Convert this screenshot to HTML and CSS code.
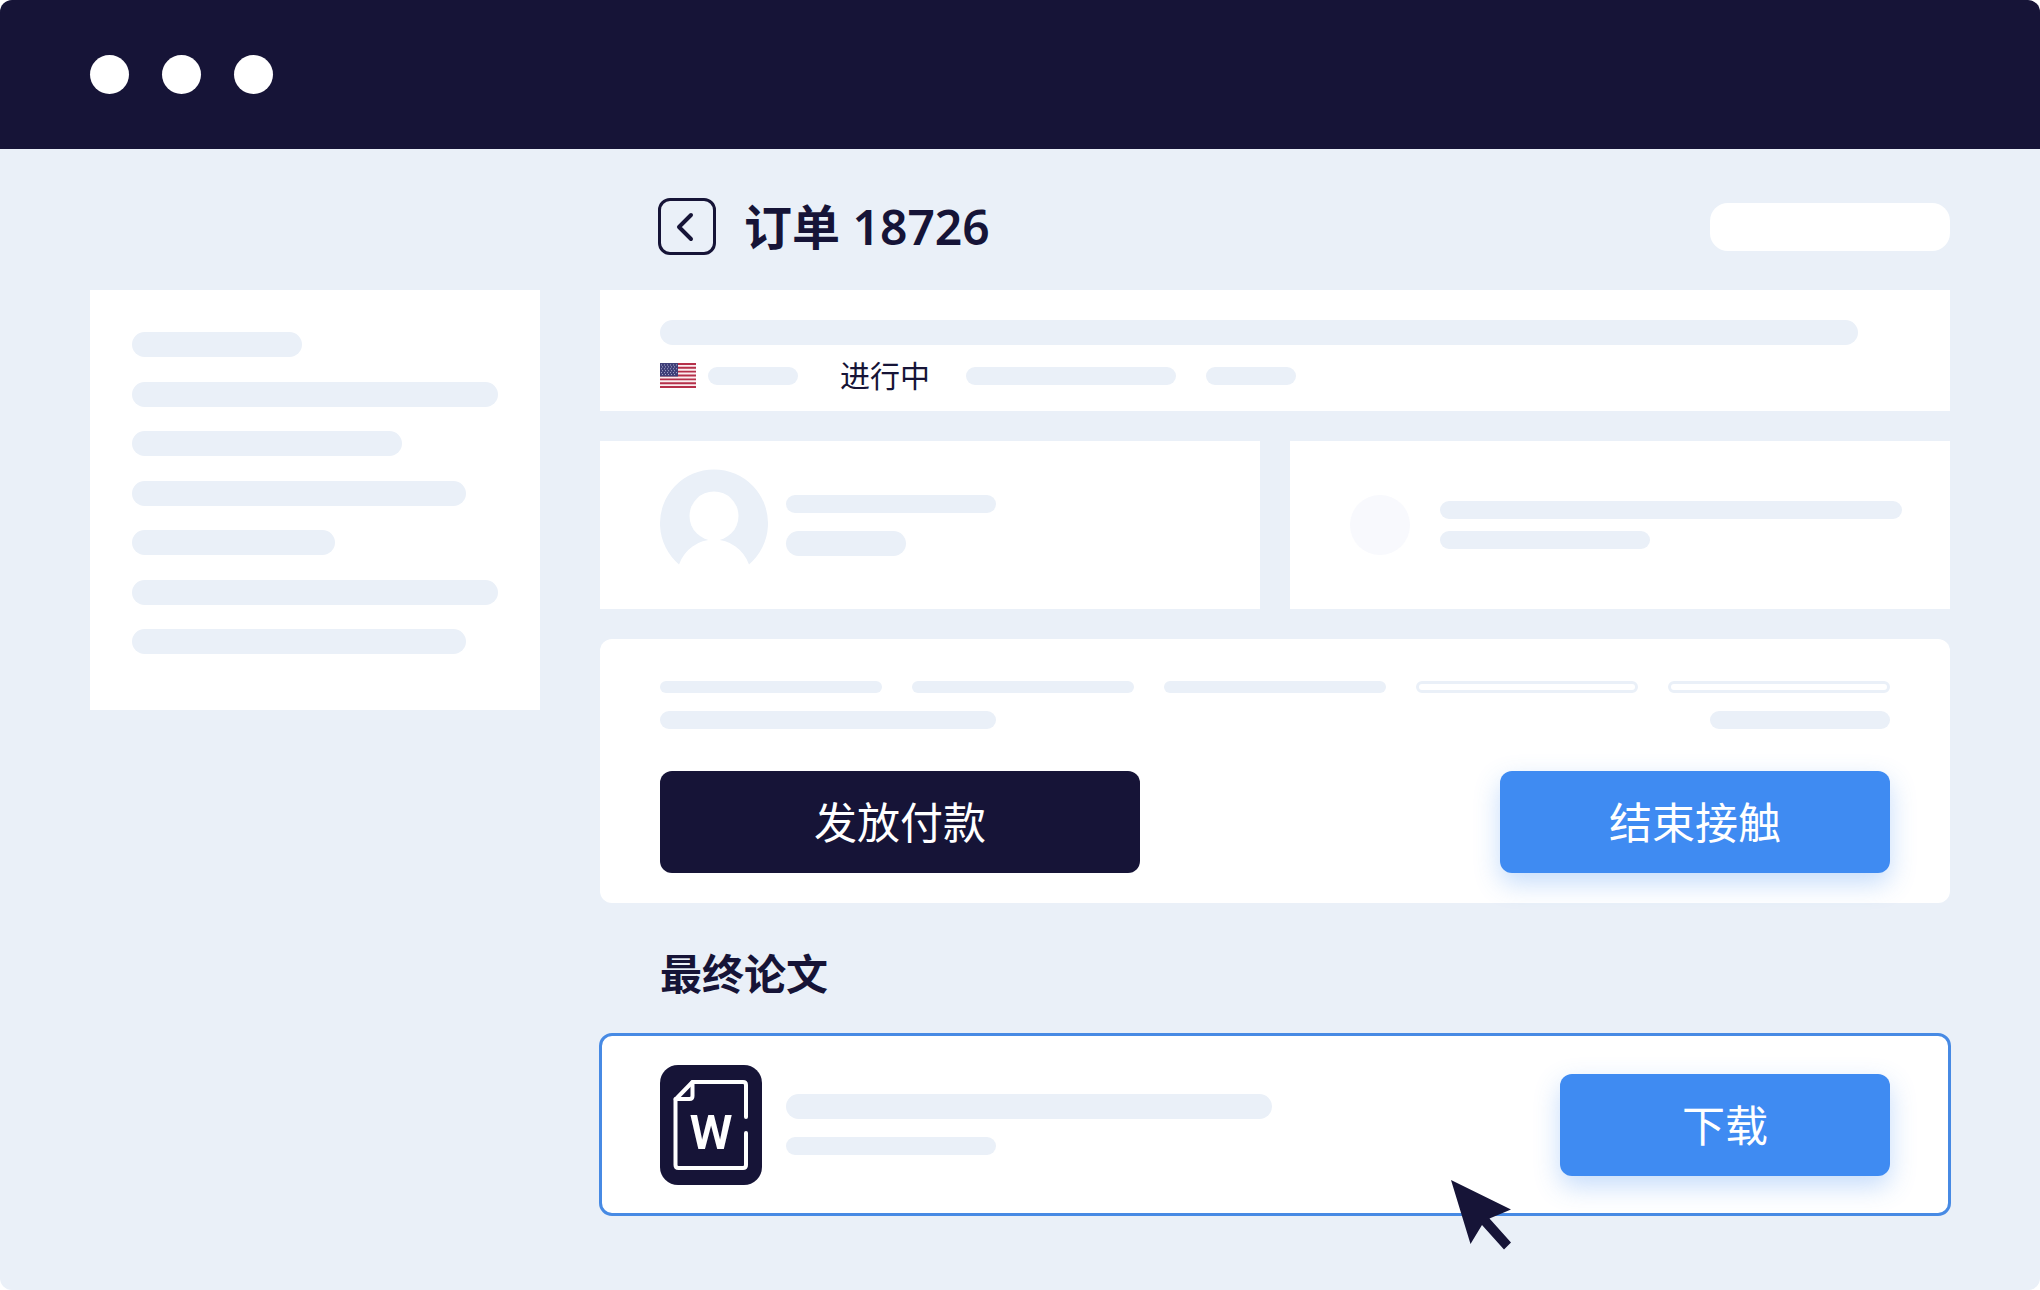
FILE: index.html
```html
<!DOCTYPE html>
<html lang="zh-CN">
<head>
<meta charset="utf-8">
<meta name="viewport" content="width=device-width, initial-scale=1">
<title>订单 18726</title>
<link rel="stylesheet" href="styles.css">
</head>
<body>
<div class="window">
  <div class="titlebar">
    <span class="dot"></span><span class="dot"></span><span class="dot"></span>
  </div>

  <div class="layout">
    <header class="page-head">
      <button class="back" type="button" aria-label="返回">
        <svg width="18" height="30" viewBox="0 0 18 30" fill="none" stroke="currentColor" stroke-width="4" stroke-linecap="round" stroke-linejoin="round"><path d="M15 3 3 15l12 12"/></svg>
      </button>
      <h1 class="title">订单 18726</h1>
      <span class="head-pill"></span>
    </header>

    <aside class="sidebar">
      <span class="bar bar-lg" style="width:46.4%"></span>
      <span class="bar bar-lg" style="width:100%"></span>
      <span class="bar bar-lg" style="width:73.8%"></span>
      <span class="bar bar-lg" style="width:91.2%"></span>
      <span class="bar bar-lg" style="width:55.6%"></span>
      <span class="bar bar-lg" style="width:100%"></span>
      <span class="bar bar-lg" style="width:91.2%"></span>
    </aside>

    <main class="content">
      <section class="card summary">
        <span class="bar bar-lg summary-title"></span>
        <div class="summary-row">
          <svg class="flag" width="36" height="25" viewBox="0 0 36 26" preserveAspectRatio="none" aria-hidden="true">
            <rect width="36" height="26" fill="#fbeef0"/>
            <path stroke="#b5304a" stroke-width="2" d="M0 1h36M0 5h36M0 9h36M0 13h36M0 17h36M0 21h36M0 25h36"/>
            <rect width="18" height="14" fill="#3f3f78"/>
            <path stroke="#a9a9cc" stroke-width="1" stroke-dasharray="1 2" d="M1 2h16M2 4h15M1 6h16M2 8h15M1 10h16M2 12h15"/>
          </svg>
          <span class="bar w-90"></span>
          <span class="status">进行中</span>
          <span class="bar w-210"></span>
          <span class="bar w-90"></span>
        </div>
      </section>

      <div class="pair">
        <section class="card person">
          <svg class="avatar" width="108" height="112" viewBox="0 0 108 112" aria-hidden="true">
            <path fill="#eaf0f8" d="M19 95.500A54 54 0 1 1 89 95.500A37 37 0 0 0 19 95.500Z"/>
            <circle cx="54" cy="47" r="24.500" fill="#fff"/>
          </svg>
          <div class="lines">
            <span class="bar w-210"></span>
            <span class="bar bar-lg w-120"></span>
          </div>
        </section>
        <section class="card note">
          <span class="disc"></span>
          <div class="lines lines-tight">
            <span class="bar"></span>
            <span class="bar w-210"></span>
          </div>
        </section>
      </div>

      <section class="card card-round progress">
        <div class="steps">
          <span class="step"></span>
          <span class="step"></span>
          <span class="step"></span>
          <span class="step step-open"></span>
          <span class="step step-open"></span>
        </div>
        <div class="split">
          <span class="bar w-336"></span>
          <span class="bar w-180"></span>
        </div>
        <div class="split actions">
          <button class="btn btn-dark" type="button">发放付款</button>
          <button class="btn btn-blue" type="button">结束接触</button>
        </div>
      </section>

      <h2 class="section-title">最终论文</h2>

      <section class="card card-round file">
        <svg class="file-icon" width="102" height="120" viewBox="0 0 102 120" aria-hidden="true">
          <rect width="102" height="120" rx="18" fill="#161437"/>
          <g fill="none" stroke="#fff" stroke-width="4" stroke-linecap="round" stroke-linejoin="round">
            <path d="M86 52V20q0-3-3-3H32.500L15.500 34.500V100q0 3 3 3H83q3 0 3-3V68"/>
            <path d="M32.500 17V31q0 3-3 3H15.500"/>
          </g>
          <text class="file-letter" x="51" y="84" text-anchor="middle">W</text>
        </svg>
        <div class="lines">
          <span class="bar bar-lg w-486"></span>
          <span class="bar w-210"></span>
        </div>
        <button class="btn btn-blue btn-download" type="button">下载</button>
        <svg class="cursor" width="60" height="70" viewBox="0 0 60 70" aria-hidden="true">
          <path fill="#161437" d="M0 0 60 29.500 38.500 38.500 60 62.500 53 69.500 31 45 19.500 64Z"/>
        </svg>
      </section>
    </main>
  </div>
</div>
</body>
</html>
```
FILE: styles.css
```css
:root {
  --navy: #161437;
  --blue: #3f8bf2;
  --mist: #eaf0f8;
}

* {
  box-sizing: border-box;
}

body {
  margin: 0;
  background: #fff;
  color: var(--navy);
  font-family: "Noto Sans", "Noto Sans CJK SC", sans-serif;
}

.window {
  min-height: 100vh;
  background: var(--mist);
  border-radius: 12px;
  overflow: hidden;
}

.titlebar {
  display: flex;
  align-items: center;
  gap: 33px;
  height: 149px;
  padding: 0 90px;
  background: var(--navy);
}

.dot {
  width: 39px;
  height: 39px;
  border-radius: 50%;
  background: #fff;
}

.layout {
  display: grid;
  grid-template-columns: 450px minmax(0, 1fr);
  column-gap: 60px;
  align-items: start;
  padding: 0 90px 72px;
}

.page-head {
  grid-column: 2;
  display: flex;
  align-items: center;
  padding: 49px 0 35px 58px;
}

.back {
  display: flex;
  align-items: center;
  justify-content: center;
  width: 58px;
  height: 57px;
  padding: 0 4px 0 0;
  border: 3px solid var(--navy);
  border-radius: 12px;
  background: none;
  color: inherit;
}

.title {
  margin: 0 auto 0 28px;
  font-size: 48px;
  line-height: 56px;
  font-weight: 600;
}

.head-pill {
  width: 240px;
  height: 48px;
  border-radius: 18px;
  background: #fff;
}

.sidebar {
  display: flex;
  flex-direction: column;
  justify-content: space-between;
  height: 420px;
  padding: 42px 42px 56px;
  background: #fff;
}

.bar {
  height: 18px;
  border-radius: 13px;
  background: var(--mist);
}

.bar-lg {
  height: 25px;
}

.w-90 { width: 90px; }
.w-120 { width: 120px; }
.w-180 { width: 180px; }
.w-210 { width: 210px; }
.w-336 { width: 336px; }
.w-486 { width: 486px; }

.card {
  background: #fff;
}

.card-round {
  border-radius: 12px;
}

.summary {
  display: flex;
  flex-direction: column;
  gap: 18px;
  padding: 30px 60px 23px;
}

.summary-title {
  margin-right: 32px;
}

.summary-row {
  display: flex;
  align-items: center;
  gap: 30px;
}

.flag {
  margin-right: -18px;
}

.status {
  margin: 0 6px 0 12px;
  font-size: 30px;
  line-height: 25px;
}

.pair {
  display: grid;
  grid-template-columns: 1fr 1fr;
  gap: 30px;
  margin: 30px 0;
}

.person,
.note {
  display: flex;
  align-items: center;
  height: 168px;
  padding: 0 60px;
}

.person {
  gap: 18px;
}

.note {
  gap: 30px;
  padding-right: 48px;
}

.lines {
  display: flex;
  flex: 1;
  flex-direction: column;
  gap: 18px;
}

.lines-tight {
  gap: 12px;
}

.disc {
  width: 60px;
  height: 60px;
  border-radius: 50%;
  background: #f8f9fd;
}

.progress {
  padding: 42px 60px 30px;
}

.steps {
  display: grid;
  grid-template-columns: repeat(5, 1fr);
  gap: 30px;
  margin-bottom: 18px;
}

.step {
  height: 12px;
  border-radius: 6px;
  background: var(--mist);
}

.step-open {
  border: 3px solid var(--mist);
  background: #fff;
}

.split {
  display: flex;
  justify-content: space-between;
}

.actions {
  margin-top: 42px;
}

.btn {
  height: 102px;
  padding: 0 0 3px;
  border: 0;
  border-radius: 12px;
  color: #fff;
  font-family: inherit;
  font-size: 43px;
}

.btn-dark {
  width: 480px;
  background: var(--navy);
}

.btn-blue {
  width: 390px;
  background: var(--blue);
  box-shadow: 0 10px 26px rgba(63, 139, 242, 0.3);
}

.btn-download {
  width: 330px;
}

.section-title {
  margin: 41px 60px 30px;
  font-size: 42px;
  line-height: 60px;
  font-weight: 700;
}

.file {
  position: relative;
  display: flex;
  align-items: center;
  gap: 24px;
  height: 181px;
  padding: 0 60px;
  outline: 3px solid #478ae4;
  outline-offset: -2px;
}

.file-letter {
  fill: #fff;
  font-family: Roboto, sans-serif;
  font-size: 49px;
  font-weight: 600;
}

.cursor {
  position: absolute;
  top: 146px;
  right: 439px;
}
```
